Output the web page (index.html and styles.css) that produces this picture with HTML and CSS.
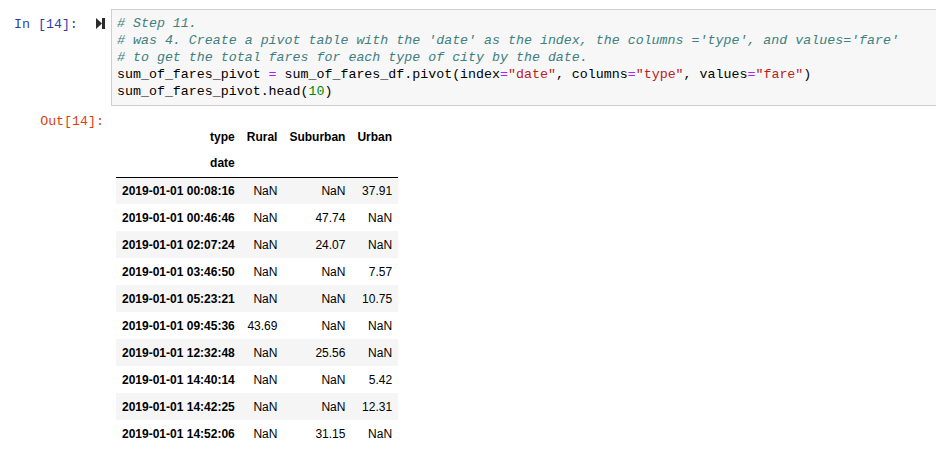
FILE: index.html
```html
<!DOCTYPE html>
<html>
<head>
<meta charset="utf-8">
<link rel="stylesheet" href="styles.css">
</head>
<body>
<div class="cell">
  <div class="input">
    <div class="prompt in-prompt">
      <span class="prompt-text">In [14]:</span>
      <svg class="run-icon" width="9" height="11" viewBox="0 0 9 11"><polygon points="0,0 6,5.5 0,11" fill="#2b2b2b"/><rect x="6" y="0" width="3" height="11" fill="#2b2b2b"/></svg>
    </div>
    <div class="code"><pre><span class="cm"># Step 11.</span>
<span class="cm"># was 4. Create a pivot table with the 'date' as the index, the columns ='type', and values='fare'</span>
<span class="cm"># to get the total fares for each type of city by the date.</span>
sum_of_fares_pivot <span class="op">=</span> sum_of_fares_df.pivot(index<span class="op">=</span><span class="str">"date"</span>, columns<span class="op">=</span><span class="str">"type"</span>, values<span class="op">=</span><span class="str">"fare"</span>)
sum_of_fares_pivot.head(<span class="num">10</span>)</pre></div>
  </div>
  <div class="output">
    <div class="prompt out-prompt">Out[14]:</div>
    <div class="out-body">
      <table class="df">
        <thead>
          <tr><th>type</th><th>Rural</th><th>Suburban</th><th>Urban</th></tr>
          <tr class="last-head"><th>date</th><th></th><th></th><th></th></tr>
        </thead>
        <tbody>
          <tr><th>2019-01-01 00:08:16</th><td>NaN</td><td>NaN</td><td>37.91</td></tr>
          <tr><th>2019-01-01 00:46:46</th><td>NaN</td><td>47.74</td><td>NaN</td></tr>
          <tr><th>2019-01-01 02:07:24</th><td>NaN</td><td>24.07</td><td>NaN</td></tr>
          <tr><th>2019-01-01 03:46:50</th><td>NaN</td><td>NaN</td><td>7.57</td></tr>
          <tr><th>2019-01-01 05:23:21</th><td>NaN</td><td>NaN</td><td>10.75</td></tr>
          <tr><th>2019-01-01 09:45:36</th><td>43.69</td><td>NaN</td><td>NaN</td></tr>
          <tr><th>2019-01-01 12:32:48</th><td>NaN</td><td>25.56</td><td>NaN</td></tr>
          <tr><th>2019-01-01 14:40:14</th><td>NaN</td><td>NaN</td><td>5.42</td></tr>
          <tr><th>2019-01-01 14:42:25</th><td>NaN</td><td>NaN</td><td>12.31</td></tr>
          <tr><th>2019-01-01 14:52:06</th><td>NaN</td><td>31.15</td><td>NaN</td></tr>
        </tbody>
      </table>
    </div>
  </div>
</div>
</body>
</html>
```
FILE: styles.css
```css
html, body {
  margin: 0;
  padding: 0;
  background: #fff;
  overflow: hidden;
}
body {
  width: 936px;
  height: 454px;
}
.cell {
  padding-top: 9px;
}
.input {
  display: flex;
  align-items: flex-start;
}
.prompt {
  font-family: "Liberation Mono", "Courier New", monospace;
  font-size: 13.3px;
  line-height: 17px;
  width: 111px;
  flex: none;
  box-sizing: border-box;
}
.in-prompt {
  display: flex;
  align-items: flex-start;
  color: #303f9f;
  padding-top: 7px;
  padding-left: 14px;
}
.prompt-text {
  width: 82px;
}
.run-icon {
  margin-top: 2px;
}
.code {
  flex: 1;
  margin-right: -20px;
  background: #f7f7f7;
  border: 1px solid #cfcfcf;
  padding: 5px 5px;
}
.code pre {
  margin: 0;
  font-family: "Liberation Mono", "Courier New", monospace;
  font-size: 13.3px;
  line-height: 17px;
  color: #000;
}
.cm { color: #408080; font-style: italic; }
.op { color: #aa22ff; }
.str { color: #ba2121; }
.num { color: #008800; }

.output {
  display: flex;
  align-items: flex-start;
  padding-top: 7px;
}
.out-prompt {
  color: #d84315;
  text-align: right;
  padding-right: 7px;
}
.out-body {
  padding-left: 5px;
  padding-top: 10px;
}
.df {
  border-collapse: collapse;
  border-spacing: 0;
  font-family: "Liberation Sans", Arial, sans-serif;
  font-size: 12px;
  color: #000;
}
.df th, .df td {
  height: 27px;
  padding: 0 6px;
  text-align: right;
  vertical-align: middle;
  line-height: 14px;
  box-sizing: border-box;
  white-space: nowrap;
}
.df th { font-weight: bold; }
.df td { font-weight: normal; }
.df .last-head th {
  border-bottom: 1px solid #000;
}
.df tbody tr:nth-child(odd) {
  background: #f5f5f5;
}
```
